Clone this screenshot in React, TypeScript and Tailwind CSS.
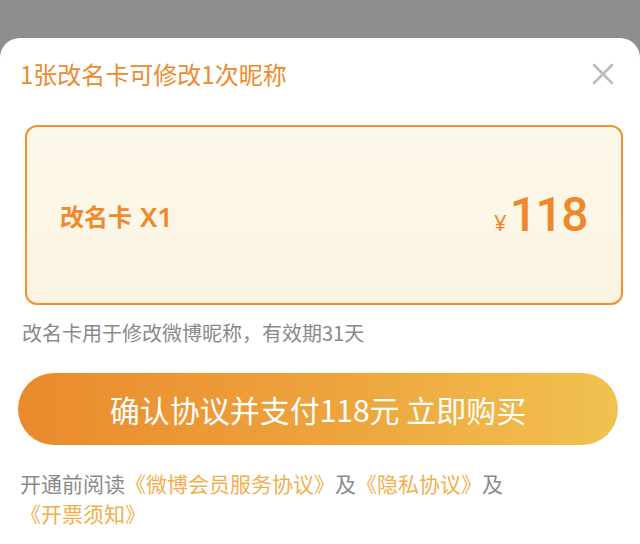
import React from "react";

export default function App() {
  const font = { fontFamily: '"Noto Sans CJK SC", "Noto Sans", sans-serif' };
  return (
    <div className="w-[640px] h-[544px] bg-[#8e8e8e] pt-[38px] overflow-hidden" style={font}>
      <div className="h-full bg-white rounded-t-[20px] px-[20px] pt-[20px]">
        <div className="flex items-center justify-between h-[32px]">
          <div className="text-[24px] leading-[32px] text-[#ec8b2e]">1张改名卡可修改1次昵称</div>
          <svg width="22" height="22" viewBox="0 0 22 22" className="mr-[6px]">
            <path d="M2 2L20 20M20 2L2 20" stroke="#bcbcbc" strokeWidth="2.6" strokeLinecap="round" />
          </svg>
        </div>
        <div className="mt-[35px] ml-[5px] w-[598px] h-[180px] rounded-[12px] border-2 border-[#ef922f] bg-gradient-to-b from-[#fdf9ea] to-[#fcf4e3] flex items-center justify-between pl-[33px] pr-[34px]">
          <div className="flex items-center text-[24px] font-semibold text-[#ec8b2e] pt-[2px]">
            <span>改名卡</span>
            <span style={{ fontFamily: '"Noto Sans", sans-serif' }} className="ml-[8px] text-[27px] leading-none font-semibold">X1</span>
          </div>
          <div className="flex items-baseline text-[#ee892b]">
            <span className="text-[22px] mr-[3px]" style={{ fontFamily: '"Noto Sans", sans-serif' }}>¥</span>
            <span className="text-[48px] font-medium leading-none tracking-[-1.5px]" style={{ fontFamily: 'Roboto, sans-serif' }}>118</span>
          </div>
        </div>
        <div className="mt-[14px] ml-[2px] text-[20px] leading-[28px] text-[#8a8a8a]">改名卡用于修改微博昵称，有效期31天</div>
        <div className="mt-[26px] ml-[-2px] w-[600px] h-[72px] rounded-full bg-gradient-to-r from-[#ea8a2c] via-[#eda23c] to-[#f1c24f] flex items-center justify-center">
          <span className="text-[30px] text-white font-normal">确认协议并支付118元 立即购买</span>
        </div>
        <div className="mt-[23px] text-[21px] leading-[30px] text-[#8a8a8a] w-[520px]">
          开通前阅读<span className="text-[#f0b04c]">《微博会员服务协议》</span>及<span className="text-[#f0b04c]">《隐私协议》</span>及
          <br />
          <span className="text-[#f0b04c]">《开票须知》</span>
        </div>
      </div>
    </div>
  );
}
